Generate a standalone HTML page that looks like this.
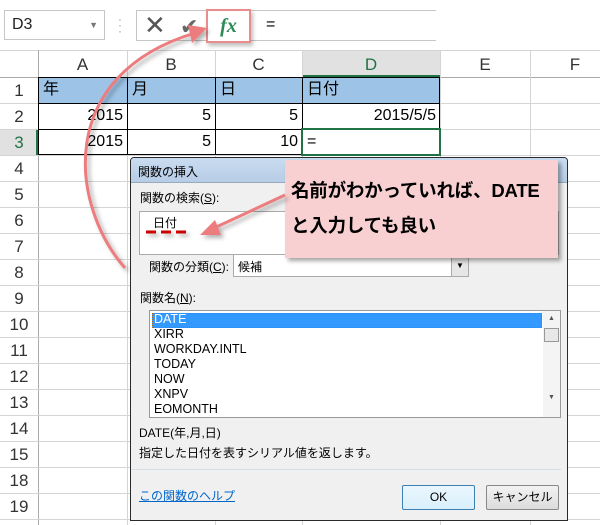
<!DOCTYPE html>
<html><head><meta charset="utf-8"><style>
*{margin:0;padding:0;box-sizing:border-box}
body{width:600px;height:525px;overflow:hidden;background:#fff;position:relative;font-family:"Liberation Sans","Noto Sans CJK JP",sans-serif;color:#000}
.a{position:absolute}
.hl{position:absolute;background:#d4d4d4}
.rh{position:absolute;left:0;width:38px;text-align:center;font-size:17px;color:#333}
.ch{position:absolute;top:52px;height:25px;text-align:center;font-size:17px;color:#333;line-height:25px}
.c{position:absolute;font-size:16px;line-height:26px;padding:0 4px}
.dl{font-size:12px;position:absolute}
</style></head><body>
<div class="a" style="left:4px;top:10px;width:101px;height:30px;border:1px solid #c6c6c6;font-size:16px;line-height:28px;padding-left:7px;color:#222">D3<span style="position:absolute;right:6px;top:0;font-size:9px;color:#777">▼</span></div>
<div class="a" style="left:118px;top:16px;font-size:12px;color:#999;line-height:6px">·<br>·<br>·</div>
<div class="a" style="left:136px;top:10px;width:300px;height:31px;border:1px solid #c6c6c6;border-right:none"></div>
<div class="a" style="left:144px;top:10px;font-size:26px;color:#555;line-height:31px">✕</div>
<div class="a" style="left:180px;top:10px;font-size:22px;color:#666;line-height:34px">✔</div>
<div class="a" style="left:206px;top:9px;width:45px;height:34px;border:2px solid #e88c8c;background:#fff;box-shadow:2px 3px 4px rgba(0,0,0,.25);font-family:'Liberation Serif',serif;font-style:italic;font-weight:bold;color:#2e8b57;font-size:20px;text-align:center;line-height:30px">fx</div>
<div class="a" style="left:266px;top:12px;font-size:16px;line-height:26px">=</div>
<div class="a" style="left:0;top:50px;width:600px;height:27px;background:#fff"></div>
<div class="a" style="left:302px;top:51px;width:138px;height:26px;background:#e1e1e1;border-bottom:2px solid #217346"></div>
<div class="a" style="left:0;top:129px;width:38px;height:26px;background:#e1e1e1;border-right:2px solid #217346"></div>
<div class="hl" style="left:0;top:50px;width:600px;height:1px"></div>
<div class="hl" style="left:0;top:77px;width:600px;height:1px;background:#aaa"></div>
<div class="hl" style="left:38px;top:50px;width:1px;height:475px;background:#aaa"></div>
<div class="hl" style="left:127px;top:50px;width:1px;height:475px"></div>
<div class="hl" style="left:215px;top:50px;width:1px;height:475px"></div>
<div class="hl" style="left:302px;top:50px;width:1px;height:475px"></div>
<div class="hl" style="left:440px;top:50px;width:1px;height:475px"></div>
<div class="hl" style="left:530px;top:50px;width:1px;height:475px"></div>
<div class="hl" style="left:0;top:103px;width:600px;height:1px"></div>
<div class="hl" style="left:0;top:129px;width:600px;height:1px"></div>
<div class="hl" style="left:0;top:155px;width:600px;height:1px"></div>
<div class="hl" style="left:0;top:181px;width:600px;height:1px"></div>
<div class="hl" style="left:0;top:207px;width:600px;height:1px"></div>
<div class="hl" style="left:0;top:233px;width:600px;height:1px"></div>
<div class="hl" style="left:0;top:259px;width:600px;height:1px"></div>
<div class="hl" style="left:0;top:285px;width:600px;height:1px"></div>
<div class="hl" style="left:0;top:311px;width:600px;height:1px"></div>
<div class="hl" style="left:0;top:337px;width:600px;height:1px"></div>
<div class="hl" style="left:0;top:363px;width:600px;height:1px"></div>
<div class="hl" style="left:0;top:389px;width:600px;height:1px"></div>
<div class="hl" style="left:0;top:415px;width:600px;height:1px"></div>
<div class="hl" style="left:0;top:441px;width:600px;height:1px"></div>
<div class="hl" style="left:0;top:467px;width:600px;height:1px"></div>
<div class="hl" style="left:0;top:493px;width:600px;height:1px"></div>
<div class="hl" style="left:0;top:519px;width:600px;height:1px"></div>
<div class="ch" style="left:38px;width:89px">A</div>
<div class="ch" style="left:127px;width:88px">B</div>
<div class="ch" style="left:215px;width:87px">C</div>
<div class="ch" style="left:302px;width:138px;color:#217346">D</div>
<div class="ch" style="left:440px;width:90px">E</div>
<div class="ch" style="left:530px;width:90px">F</div>
<div class="rh" style="top:78px;line-height:26px">1</div>
<div class="rh" style="top:104px;line-height:26px">2</div>
<div class="rh" style="top:130px;line-height:26px;color:#217346">3</div>
<div class="rh" style="top:156px;line-height:26px">4</div>
<div class="rh" style="top:182px;line-height:26px">5</div>
<div class="rh" style="top:208px;line-height:26px">6</div>
<div class="rh" style="top:234px;line-height:26px">7</div>
<div class="rh" style="top:260px;line-height:26px">8</div>
<div class="rh" style="top:286px;line-height:26px">9</div>
<div class="rh" style="top:312px;line-height:26px">10</div>
<div class="rh" style="top:338px;line-height:26px">11</div>
<div class="rh" style="top:364px;line-height:26px">12</div>
<div class="rh" style="top:390px;line-height:26px">13</div>
<div class="rh" style="top:416px;line-height:26px">14</div>
<div class="rh" style="top:442px;line-height:26px">15</div>
<div class="rh" style="top:468px;line-height:26px">18</div>
<div class="rh" style="top:494px;line-height:26px">19</div>
<div class="a" style="left:38px;top:77px;width:402px;height:26px;background:#9dc3e6"></div>
<div class="a" style="left:38px;top:77px;width:402px;height:78px;border:1px solid #000"></div>
<div class="a" style="left:38px;top:103px;width:402px;height:1px;background:#000"></div>
<div class="a" style="left:38px;top:129px;width:402px;height:1px;background:#000"></div>
<div class="a" style="left:127px;top:77px;width:1px;height:78px;background:#000"></div>
<div class="a" style="left:215px;top:77px;width:1px;height:78px;background:#000"></div>
<div class="a" style="left:302px;top:77px;width:1px;height:78px;background:#000"></div>
<div class="c" style="left:39px;top:77px">年</div>
<div class="c" style="left:128px;top:77px">月</div>
<div class="c" style="left:216px;top:77px">日</div>
<div class="c" style="left:303px;top:77px">日付</div>
<div class="c" style="left:38px;top:103px;width:89px;text-align:right">2015</div>
<div class="c" style="left:127px;top:103px;width:88px;text-align:right">5</div>
<div class="c" style="left:215px;top:103px;width:87px;text-align:right">5</div>
<div class="c" style="left:302px;top:103px;width:138px;text-align:right">2015/5/5</div>
<div class="c" style="left:38px;top:129px;width:89px;text-align:right">2015</div>
<div class="c" style="left:127px;top:129px;width:88px;text-align:right">5</div>
<div class="c" style="left:215px;top:129px;width:87px;text-align:right">10</div>
<div class="a" style="left:301px;top:128px;width:140px;height:28px;border:2px solid #217346"></div>
<div class="c" style="left:303px;top:129px">=</div>
<div class="a" style="left:130px;top:157px;width:438px;height:364px;background:#f0f0f0;border:1px solid #2a2a2a;border-radius:4px 4px 0 0;overflow:hidden">
 <div style="height:25px;background:linear-gradient(#c9dcf0,#b7cde6);border-bottom:1px solid #9ab">
  <span class="dl" style="left:7px;top:5px">関数の挿入</span></div>
 <span class="dl" style="left:9px;top:31px">関数の検索(<u>S</u>):</span>
 <div class="a" style="left:8px;top:53px;width:420px;height:44px;background:#fff;border:1px solid #aaa"></div>
 <span class="dl" style="left:22px;top:56px">日付</span>
 <span class="dl" style="left:18px;top:100px">関数の分類(<u>C</u>):</span>
 <div class="a" style="left:102px;top:96px;width:236px;height:23px;background:#fff;border:1px solid #aaa"><span class="dl" style="left:4px;top:3px">候補</span>
  <div class="a" style="right:0;top:0;width:17px;height:21px;background:#e6e6e6;border-left:1px solid #aaa;font-size:8px;text-align:center;line-height:21px">▼</div></div>
 <span class="dl" style="left:9px;top:131px">関数名(<u>N</u>):</span>
 <div class="a" style="left:18px;top:152px;width:412px;height:108px;background:#fff;border:1px solid #999">
  <div class="a" style="left:2px;top:2px;width:390px;height:15px;background:#3399ff;border:1px dotted #c60"></div>
  <div class="a" style="left:4px;top:1px;font-size:12.5px;line-height:15px">
   <span style="color:#fff">DATE</span><br>XIRR<br>WORKDAY.INTL<br>TODAY<br>NOW<br>XNPV<br>EOMONTH</div>
  <div class="a" style="right:0;top:0;width:17px;height:106px;background:#f4f4f4"><div style="font-size:7px;text-align:center;color:#555;margin-top:4px">▲</div>
   <div style="margin:6px 1px;height:14px;background:#e8e8e8;border:1px solid #999"></div>
   <div style="font-size:7px;text-align:center;color:#555;margin-top:52px">▼</div></div>
 </div>
 <span class="dl" style="left:8px;top:266px">DATE(年,月,日)</span>
 <span class="dl" style="left:8px;top:286px">指定した日付を表すシリアル値を返します。</span>
 <div class="a" style="left:0;top:311px;width:430px;height:1px;background:#d5dde5"></div>
 <span class="dl" style="left:8px;top:329px;color:#06c;text-decoration:underline">この関数のヘルプ</span>
 <div class="a" style="left:271px;top:327px;width:73px;height:25px;border:1px solid #3c7fb1;border-radius:2px;background:linear-gradient(#eaf6fd,#d9f0fc);font-size:12px;text-align:center;line-height:23px">OK</div>
 <div class="a" style="left:355px;top:327px;width:73px;height:25px;border:1px solid #888;border-radius:2px;background:linear-gradient(#f2f2f2,#dcdcdc);font-size:12px;text-align:center;line-height:23px">キャンセル</div>
</div>
<div class="a" style="left:285px;top:160px;width:273px;height:98px;background:#f8d0d2;box-shadow:3px 3px 4px rgba(0,0,0,.35);font-size:18.5px;font-weight:bold;line-height:35px;padding:13px 0 0 6px;letter-spacing:-0.2px;white-space:nowrap">名前がわかっていれば、DATE<br>と入力しても良い</div>
<svg class="a" style="left:0;top:0" width="600" height="525">
 <defs><filter id="s"><feDropShadow dx="3" dy="3" stdDeviation="2" flood-opacity=".3"/></filter></defs>
 <g filter="url(#s)">
 <path d="M125,268 C70,205 55,75 195,33" fill="none" stroke="#ec7b7e" stroke-width="3"/>
 <polygon points="207,28 188,25 192,43" fill="#ec7b7e"/>
 <path d="M285,195 L212,229" stroke="#ec7b7e" stroke-width="3"/>
 <polygon points="200,235 215,220 221,235" fill="#ec7b7e"/>
 <path d="M146,232 H190" stroke="#c00" stroke-width="3" stroke-dasharray="10,5"/>
 </g>
</svg>
</body></html>
